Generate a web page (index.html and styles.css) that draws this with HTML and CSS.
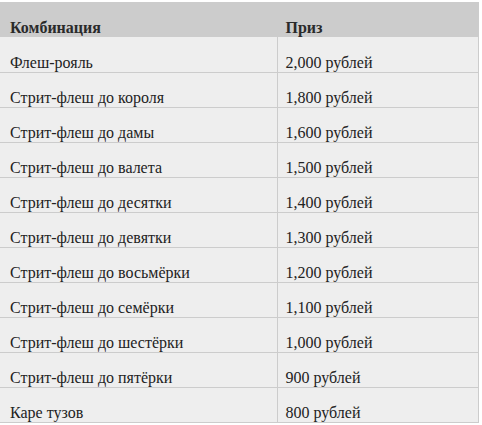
FILE: index.html
```html
<!DOCTYPE html>
<html lang="ru">
<head>
<meta charset="utf-8">
<link rel="stylesheet" href="styles.css">
</head>
<body>
<table class="prizes">
  <thead>
    <tr><th class="col-combo">Комбинация</th><th class="col-prize">Приз</th></tr>
  </thead>
  <tbody>
    <tr><td>Флеш-рояль</td><td>2,000 рублей</td></tr>
    <tr><td>Стрит-флеш до короля</td><td>1,800 рублей</td></tr>
    <tr><td>Стрит-флеш до дамы</td><td>1,600 рублей</td></tr>
    <tr><td>Стрит-флеш до валета</td><td>1,500 рублей</td></tr>
    <tr><td>Стрит-флеш до десятки</td><td>1,400 рублей</td></tr>
    <tr><td>Стрит-флеш до девятки</td><td>1,300 рублей</td></tr>
    <tr><td>Стрит-флеш до восьмёрки</td><td>1,200 рублей</td></tr>
    <tr><td>Стрит-флеш до семёрки</td><td>1,100 рублей</td></tr>
    <tr><td>Стрит-флеш до шестёрки</td><td>1,000 рублей</td></tr>
    <tr><td>Стрит-флеш до пятёрки</td><td>900 рублей</td></tr>
    <tr><td>Каре тузов</td><td>800 рублей</td></tr>
  </tbody>
</table>
</body>
</html>
```
FILE: styles.css
```css
html, body {
  margin: 0;
  padding: 0;
  background: #fff;
}
.prizes {
  margin-top: 2px;
  width: 479px;
  border-collapse: collapse;
  background: #eee;
  border-right: 1px solid #ccc;
}
.prizes th,
.prizes td {
  font-family: "Liberation Serif", "Times New Roman", serif;
  font-size: 16px;
  color: #222;
  height: 35px;
  box-sizing: border-box;
  padding: 0 9px 1px 10px;
  vertical-align: bottom;
  text-align: left;
  line-height: 17px;
}
.prizes th {
  background: #ccc;
  font-weight: bold;
  color: #2a2a2a;
  padding-bottom: 1px;
}
.col-combo {
  width: 277px;
}
.prizes td {
  border-bottom: 1px solid #ccc;
}
.prizes td + td,
.prizes th + th {
  border-left: 1px solid #ccc;
  padding-left: 8px;
}
.prizes td:first-child {
  width: 277px;
}
```
